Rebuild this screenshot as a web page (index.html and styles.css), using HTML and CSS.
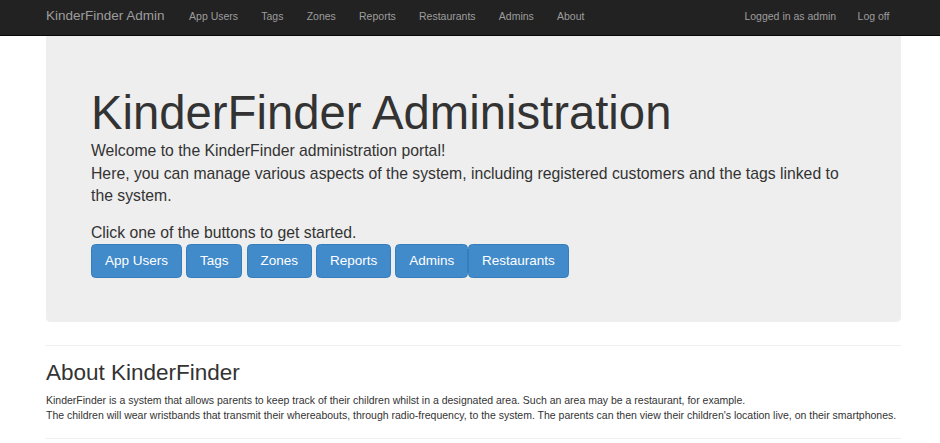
FILE: index.html
```html
<!DOCTYPE html>
<html lang="en">
<head>
<meta charset="utf-8">
<title>KinderFinder Admin</title>
<link rel="stylesheet" href="styles.css">
</head>
<body>
<nav class="navbar">
  <div class="navbar-inner">
    <a class="brand" href="#">KinderFinder Admin</a>
    <ul class="nav">
      <li><a href="#">App Users</a></li>
      <li><a href="#">Tags</a></li>
      <li><a href="#">Zones</a></li>
      <li><a href="#">Reports</a></li>
      <li><a href="#">Restaurants</a></li>
      <li><a href="#">Admins</a></li>
      <li><a href="#">About</a></li>
    </ul>
    <ul class="nav nav-right">
      <li><a href="#">Logged in as admin</a></li>
      <li><a href="#">Log off</a></li>
    </ul>
  </div>
</nav>
<main class="container">
  <section class="jumbotron">
    <h1>KinderFinder Administration</h1>
    <p class="lead">Welcome to the KinderFinder administration portal!<br>Here, you can manage various aspects of the system, including registered customers and the tags linked to the system.</p>
    <p class="lead lead-tight">Click one of the buttons to get started.</p>
    <div class="btn-row">
      <a class="btn" href="#">App Users</a>
      <a class="btn" href="#">Tags</a>
      <a class="btn" href="#">Zones</a>
      <a class="btn" href="#">Reports</a>
      <a class="btn" href="#">Admins</a>
      <a class="btn btn-joined" href="#">Restaurants</a>
    </div>
  </section>
  <hr>
  <section class="about">
    <h2>About KinderFinder</h2>
    <p>KinderFinder is a system that allows parents to keep track of their children whilst in a designated area. Such an area may be a restaurant, for example.<br>The children will wear wristbands that transmit their whereabouts, through radio-frequency, to the system. The parents can then view their children's location live, on their smartphones.</p>
  </section>
  <hr>
</main>
</body>
</html>
```

FILE: styles.css
```css
* { box-sizing: border-box; }

html, body {
  margin: 0;
  padding: 0;
}

body {
  font-family: "Liberation Sans", Arial, Helvetica, sans-serif;
  font-size: 10.5px;
  line-height: 15px;
  color: #333;
  background: #fff;
  overflow: hidden;
}

a { text-decoration: none; }

.navbar {
  background: #222;
  border-bottom: 1px solid #080808;
  height: 36px;
}

.navbar-inner {
  display: flex;
  align-items: baseline;
  margin-left: 46px;
  width: 855px;
  height: 35px;
  padding-top: 7.5px;
}

.brand {
  color: #9d9d9d;
  font-size: 13.5px;
  line-height: 15px;
  margin-right: 24.5px;
}

.nav {
  display: flex;
  align-items: baseline;
  list-style: none;
  margin: 0;
  padding: 0;
  gap: 23.2px;
}

.nav a {
  color: #9d9d9d;
  font-size: 10.5px;
  line-height: 15px;
}

.nav-right {
  margin-left: auto;
  margin-right: 11.5px;
  gap: 21.5px;
}

.container {
  margin-left: 46px;
  width: 855px;
}

.jumbotron {
  background: #eee;
  border-radius: 0 0 4.5px 4.5px;
  padding: 36px 45px 36px 45px;
  margin-bottom: 22.5px;
}

.jumbotron h1 {
  font-size: 47.25px;
  line-height: 52px;
  font-weight: 500;
  margin: 15px 0 1px;
  color: #333;
}

.lead {
  font-size: 15.75px;
  line-height: 22.5px;
  margin: 0 0 14px;
}

.lead-tight {
  margin-bottom: -0.5px;
}

.btn-row {
  display: flex;
  margin-bottom: 8px;
}

.btn {
  display: block;
  background: #428bca;
  border: 1px solid #357ebd;
  color: #fff;
  font-size: 13.5px;
  line-height: 18px;
  padding: 7.25px 12.9px;
  border-radius: 4.5px;
}

.btn + .btn { margin-left: 4.2px; }
.btn.btn-joined { margin-left: 0; }

hr {
  border: 0;
  border-top: 1px solid #eee;
  margin: 15px 0;
}

.jumbotron + hr { margin-top: 0; }

.about h2 {
  font-size: 22.5px;
  line-height: 24.75px;
  font-weight: 500;
  margin: 15px 0 7.5px;
}

.about p {
  margin: 0 0 7.5px;
}
```
